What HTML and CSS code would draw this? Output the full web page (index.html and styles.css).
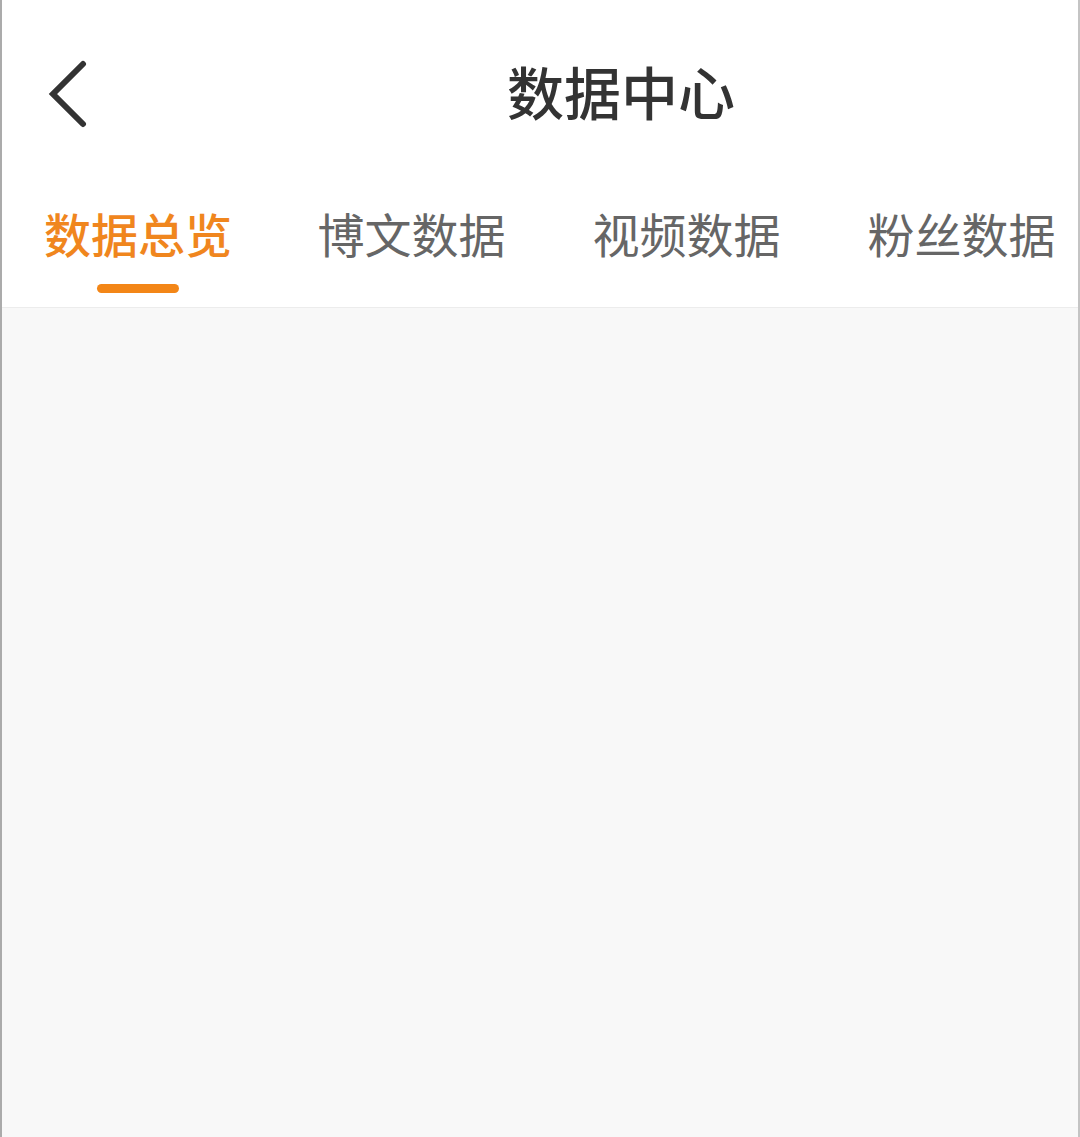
FILE: index.html
```html
<!DOCTYPE html>
<html lang="zh-CN">
<head>
<meta charset="utf-8">
<title>数据中心</title>
<link rel="stylesheet" href="styles.css">
</head>
<body>
<div class="app">
  <header class="topbar">
    <div class="back">
      <svg class="back-icon" width="40" height="68" viewBox="0 0 40 68">
        <polyline points="35,4 5,34 35,64" fill="none" stroke="#333" stroke-width="6" stroke-linecap="round" stroke-linejoin="miter"/>
      </svg>
    </div>
    <h1 class="title">数据中心</h1>
  </header>
  <nav class="tabs">
    <div class="tab active"><span>数据总览</span><i class="indicator"></i></div>
    <div class="tab"><span>博文数据</span></div>
    <div class="tab"><span>视频数据</span></div>
    <div class="tab"><span>粉丝数据</span></div>
  </nav>
  <main class="content"></main>
</div>
</body>
</html>
```
FILE: styles.css
```css
html, body {
  margin: 0;
  padding: 0;
  height: 100%;
}
body {
  font-family: "Noto Sans CJK SC", "Noto Sans", sans-serif;
  background: #fff;
}
.app {
  height: 1137px;
  display: flex;
  flex-direction: column;
  border-left: 2px solid #ababab;
  border-right: 2px solid #c4c4c4;
  box-sizing: border-box;
  overflow: hidden;
}
.topbar {
  height: 188px;
  display: flex;
  align-items: center;
  background: #fff;
}
.back {
  width: 164px;
  padding-left: 46px;
  box-sizing: border-box;
  display: flex;
  align-items: center;
}
.back-icon {
  display: block;
}
.title {
  flex: 1;
  margin: 0 0 8px;
  text-align: center;
  font-size: 57px;
  font-weight: 500;
  color: #333;
  line-height: 1;
  padding-right: 2px;
}
.tabs {
  height: 120px;
  display: flex;
  background: #fff;
  border-bottom: 1px solid #ececec;
  box-sizing: border-box;
  flex-shrink: 0;
}
.tab {
  flex: 0 0 275px;
  display: flex;
  flex-direction: column;
  align-items: center;
  padding-top: 17px;
  box-sizing: border-box;
}
.tab:first-child {
  flex-basis: 272px;
}
.tab span {
  font-size: 47px;
  line-height: 56px;
  color: #666;
}
.tab.active span {
  color: #f0861e;
  font-weight: 500;
}
.indicator {
  display: block;
  width: 82px;
  height: 9px;
  border-radius: 5px;
  background: #f38617;
  margin-top: 23px;
}
.content {
  flex: 1;
  background: #f8f8f8;
}
```
